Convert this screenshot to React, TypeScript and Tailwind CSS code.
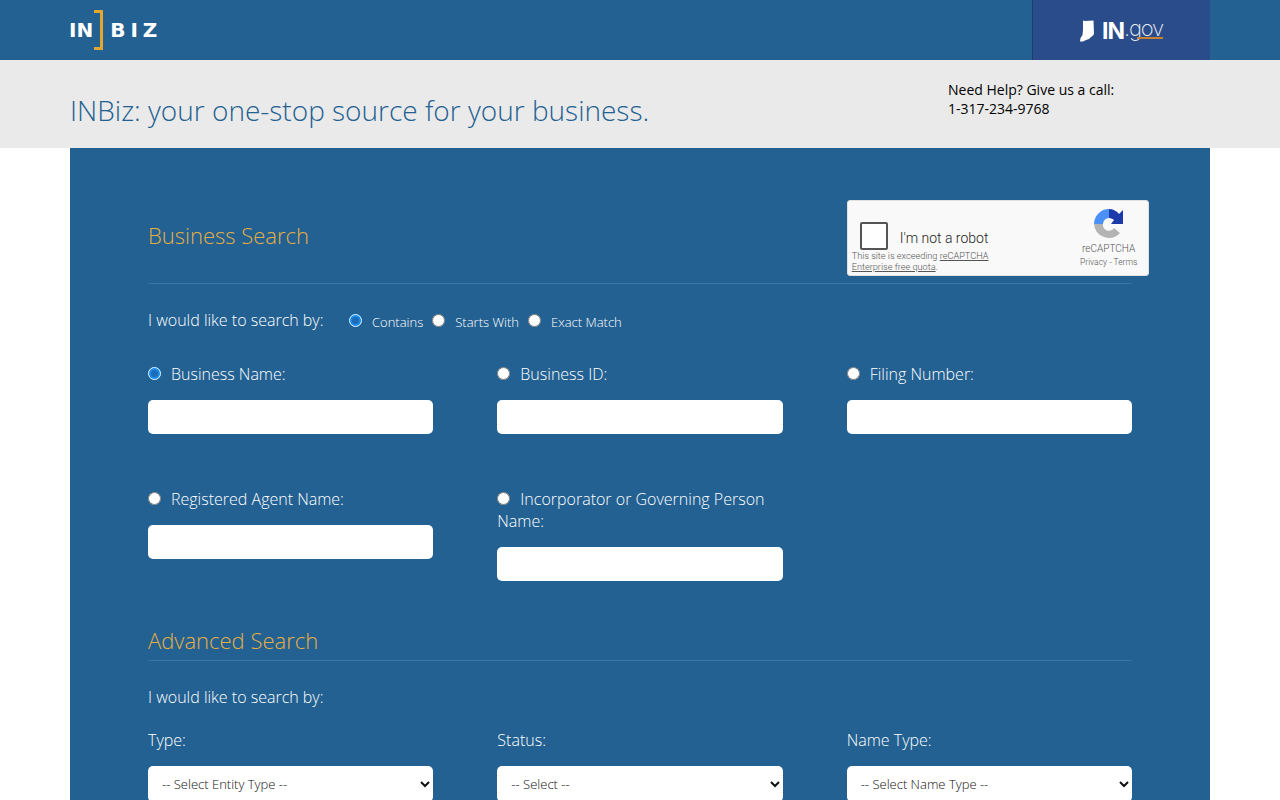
import type { ReactNode } from 'react'

function Logo() {
  return (
    <div className="flex items-center h-[40px] text-white font-['DejaVu_Sans',sans-serif] font-bold text-[20px] leading-none mt-[10px]">
      <span className="-ml-[1px]">IN</span>
      <span className="w-[9px] h-[40px] mr-[7px] ml-[1px] border-y-[3px] border-r-[3px] border-[#e2a72e]" />
      <span className="tracking-[5px]">BIZ</span>
    </div>
  )
}

function InGov() {
  return (
    <div className="w-[178px] h-[60px] bg-[#2a4c8a] border-l border-[#1d3d6e] flex items-center pl-[47px]">
      <svg viewBox="0 0 14 22" className="w-[14px] h-[22px] mr-[8px] mt-[2px]" fill="#fff">
        <path d="M3 .5 L5 1 L13.5 .5 L14 14 L12.5 16 L11 17 L9 19 L6 20 L3 21.5 L0 21.5 L.5 18 L2.5 15 L3 10 Z" />
      </svg>
      <span className="font-['Inter',sans-serif] font-bold text-[23px] leading-none text-white tracking-[-1px] mt-[2px]">IN</span>
      <span className="relative font-['Inter',sans-serif] font-extralight text-[22px] leading-none text-[#e8ecf4] tracking-[-1.2px] -mt-[5px]">
        .gov
        <span className="absolute left-[13px] right-0 bottom-0 h-[2px] bg-[#c9812f]" />
      </span>
    </div>
  )
}

function Recaptcha() {
  return (
    <div className="relative w-[302px] h-[76px] bg-[#f9f9f9] rounded-[3px] border border-[#e0e0e0] font-['Roboto',sans-serif] text-[#222]">
      <div className="flex items-center pl-[12px] pt-[21px]">
        <div className="w-[28px] h-[28px] bg-white border-2 border-[#555] rounded-[2px]" />
        <span className="ml-[12px] mt-[4px] text-[14px] leading-none">I'm not a robot</span>
      </div>
      <div className="absolute left-[4px] top-[49px] w-[170px] text-[9.2px] leading-[11px] text-[#555]">
        This site is exceeding <span className="underline">reCAPTCHA Enterprise free quota</span>.
      </div>
      <div className="absolute right-[9px] top-[7px] w-[60px] flex flex-col items-center">
        <svg viewBox="0 0 32 32" className="w-[32px] h-[32px]">
          <path d="M16 1 A15 15 0 0 0 1 16 H10 A6 6 0 0 1 16 10 Z" fill="#4a90f5" />
          <path d="M16 1 C20 1 24 3 26 6 L30 2 V16 H18 L21 12 C20 11 18 10 16 10 Z" fill="#1c3aa9" />
          <path d="M1 16 H10 A6 6 0 0 0 21 20 L27 25 A15 15 0 0 1 1 16 Z" fill="#b4b4b4" />
        </svg>
        <span className="text-[10px] leading-none text-[#555] mt-[4px]">reCAPTCHA</span>
        <span className="text-[8.5px] leading-none text-[#555] mt-[4px] whitespace-nowrap">Privacy - Terms</span>
      </div>
    </div>
  )
}

function Radio({ name, checked }: { name: string; checked?: boolean }) {
  return (
    <input
      type="radio"
      name={name}
      defaultChecked={checked}
      className="w-[13px] h-[13px] m-0 align-baseline checked:appearance-none checked:rounded-full checked:bg-[#1d6cb5] checked:border-[3px] checked:border-[#1a8cf0] checked:outline checked:outline-1 checked:-outline-offset-1 checked:outline-[#e6f4ff]"
    />
  )
}

function Heading({ children }: { children: ReactNode }) {
  return <h2 className="text-[22px] leading-[32px] font-light text-[#e5ae43]">{children}</h2>
}

function Field({ label, checked }: { label: string; checked?: boolean }) {
  return (
    <div>
      <label className="block text-[16px] leading-[22px]">
        <Radio name="by" checked={checked} />
        <span className="ml-[10px]">{label}</span>
      </label>
      <input type="text" className="block mt-[15px] w-full h-[34px] rounded-[5px] bg-white" />
    </div>
  )
}

function Choice({ label, options }: { label: string; options: string }) {
  return (
    <div>
      <div className="text-[16px] leading-[22px]">{label}</div>
      <select className="block mt-[15px] w-full h-[36px] pl-[10px] rounded-[5px] bg-white text-[#111] text-[13px] font-light font-['Open_Sans',sans-serif]">
        <option>{options}</option>
      </select>
    </div>
  )
}

export default function App() {
  return (
    <div className="h-[800px] overflow-hidden bg-white font-['Open_Sans',sans-serif]">
      <header className="h-[60px] bg-[#236192]">
        <div className="w-[1140px] mx-auto flex justify-between">
          <Logo />
          <InGov />
        </div>
      </header>
      <div className="h-[88px] bg-[#eaeaea]">
        <div className="w-[1140px] mx-auto flex justify-between">
          <h1 className="mt-[30px] text-[28px] leading-[40px] font-light text-[#236192]">
            INBiz: your one-stop source for your business.
          </h1>
          <div className="w-[262px] mt-[20px] text-[14px] leading-[19px] text-black">
            <div>Need Help? Give us a call:</div>
            <div>1-317-234-9768</div>
          </div>
        </div>
      </div>
      <main className="w-[1140px] mx-auto bg-[#236192] pt-[52px] px-[78px] pb-[40px] text-white font-light">
        <div className="grid grid-cols-3 gap-x-[64px] h-[84px] border-b border-[#3c75a3]">
          <div className="col-span-2 pt-[19px]">
            <Heading>Business Search</Heading>
          </div>
          <Recaptcha />
        </div>
        <div className="flex items-center mt-[25px] h-[22px]">
          <span className="text-[16px] leading-[22px] w-[201px]">I would like to search by:</span>
          <Radio name="match" checked />
          <span className="ml-[10px] mr-[9px] mt-[6px] text-[13px]">Contains</span>
          <Radio name="match" />
          <span className="ml-[10px] mr-[9px] mt-[6px] text-[13px]">Starts With</span>
          <Radio name="match" />
          <span className="ml-[10px] mt-[6px] text-[13px]">Exact Match</span>
        </div>
        <div className="grid grid-cols-3 gap-x-[64px] gap-y-[54px] mt-[32px]">
          <Field label="Business Name:" checked />
          <Field label="Business ID:" />
          <Field label="Filing Number:" />
          <Field label="Registered Agent Name:" />
          <Field label="Incorporator or Governing Person Name:" />
        </div>
        <div className="mt-[43px] border-b border-[#3c75a3] h-[37px]">
          <Heading>Advanced Search</Heading>
        </div>
        <div className="mt-[25px] text-[16px] leading-[22px]">I would like to search by:</div>
        <div className="grid grid-cols-3 gap-x-[64px] mt-[21px]">
          <Choice label="Type:" options="-- Select Entity Type --" />
          <Choice label="Status:" options="-- Select --" />
          <Choice label="Name Type:" options="-- Select Name Type --" />
        </div>
      </main>
    </div>
  )
}
